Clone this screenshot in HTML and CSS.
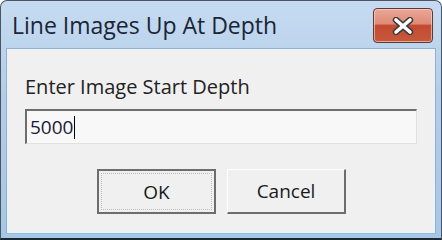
FILE: index.html
```html
<!DOCTYPE html>
<html lang="en">
<head>
    <meta charset="UTF-8">
    <title>Line Images Up At Depth</title>
    <link rel="stylesheet" href="styles.css">
</head>
<body>
    <div class="window">
        <!-- Barre de titre -->
        <div class="titlebar">
            <span class="title">Line Images Up At Depth</span>
            <button class="close" aria-label="Close">
                <svg width="24" height="18" viewBox="0 0 24 18">
                    <path d="M5 3 L19 15 M19 3 L5 15" stroke="#3a3a3a" stroke-width="6.4" stroke-linecap="round"/>
                    <path d="M5 3 L19 15 M19 3 L5 15" stroke="#ffffff" stroke-width="3.6" stroke-linecap="round"/>
                </svg>
            </button>
        </div>

        <!-- Contenu -->
        <div class="client">
            <label class="prompt" for="depth">Enter Image Start Depth</label>
            <div class="field">
                <span class="value">5000</span><span class="caret"></span>
            </div>
            <div class="buttons">
                <button class="btn default">OK</button>
                <button class="btn">Cancel</button>
            </div>
        </div>
    </div>
</body>
</html>
```

FILE: styles.css
```css
* {
    margin: 0;
    padding: 0;
    box-sizing: border-box;
    font-family: 'Open Sans', 'DejaVu Sans', sans-serif;
}

body {
    width: 442px;
    height: 240px;
    overflow: hidden;
    background: #ffffff;
}

/* Fenêtre */
.window {
    width: 442px;
    height: 240px;
    border: 1px solid #4a5560;
    border-bottom: 2px solid #1b2a30;
    border-radius: 7px 7px 0 0;
    background: linear-gradient(#c6dbf1, #b3cde9 40%, #a9c6e6);
    padding: 0 5px 4px 5px;
    display: flex;
    flex-direction: column;
}

.titlebar {
    height: 47px;
    display: flex;
    align-items: flex-start;
    justify-content: space-between;
    flex-shrink: 0;
}

.title {
    font-size: 23px;
    line-height: 23px;
    color: #1a2535;
    margin-top: 13px;
    margin-left: 6px;
}

.close {
    width: 60px;
    height: 35px;
    margin-top: 7px;
    margin-right: 3px;
    border: 1px solid #5a3a33;
    border-radius: 4px;
    background: linear-gradient(#e9a797, #e08a76 45%, #c24a31 50%, #c65a3d);
    box-shadow: inset 0 0 0 1px rgba(255, 220, 210, 0.6);
    display: flex;
    align-items: center;
    justify-content: center;
}

.client {
    flex: 1;
    background: #f0f0f0;
    border: 1px solid #8db2d8;
    border-bottom-color: #7ec6e0;
    padding: 28px 18px 0 18px;
}

.prompt {
    display: block;
    font-size: 20px;
    line-height: 20px;
    color: #222222;
}

.field {
    margin-top: 12px;
    width: 392px;
    height: 35px;
    background: #f8f8f8;
    border-top: 2px solid #6d6d6d;
    border-left: 2px solid #6d6d6d;
    border-right: 1px solid #e0e0e0;
    border-bottom: 1px solid #e0e0e0;
    display: flex;
    align-items: center;
    padding-left: 3px;
}

.value {
    font-size: 19px;
    line-height: 19px;
    color: #1a1a3a;
}

.caret {
    width: 1px;
    height: 23px;
    background: #000000;
    margin-left: 1px;
}

.buttons {
    margin-top: 25px;
    display: flex;
    gap: 11px;
    padding-left: 72px;
}

.btn {
    width: 119px;
    height: 45px;
    font-size: 19px;
    color: #1a1a1a;
    background: #f0f0f0;
    border-top: 1px solid #ffffff;
    border-left: 1px solid #ffffff;
    border-right: 2px solid #6d6d6d;
    border-bottom: 2px solid #6d6d6d;
}

.btn.default {
    border: 2px solid #6d6d6d;
    outline: 1px dotted #bbbbbb;
    outline-offset: -5px;
}
```
